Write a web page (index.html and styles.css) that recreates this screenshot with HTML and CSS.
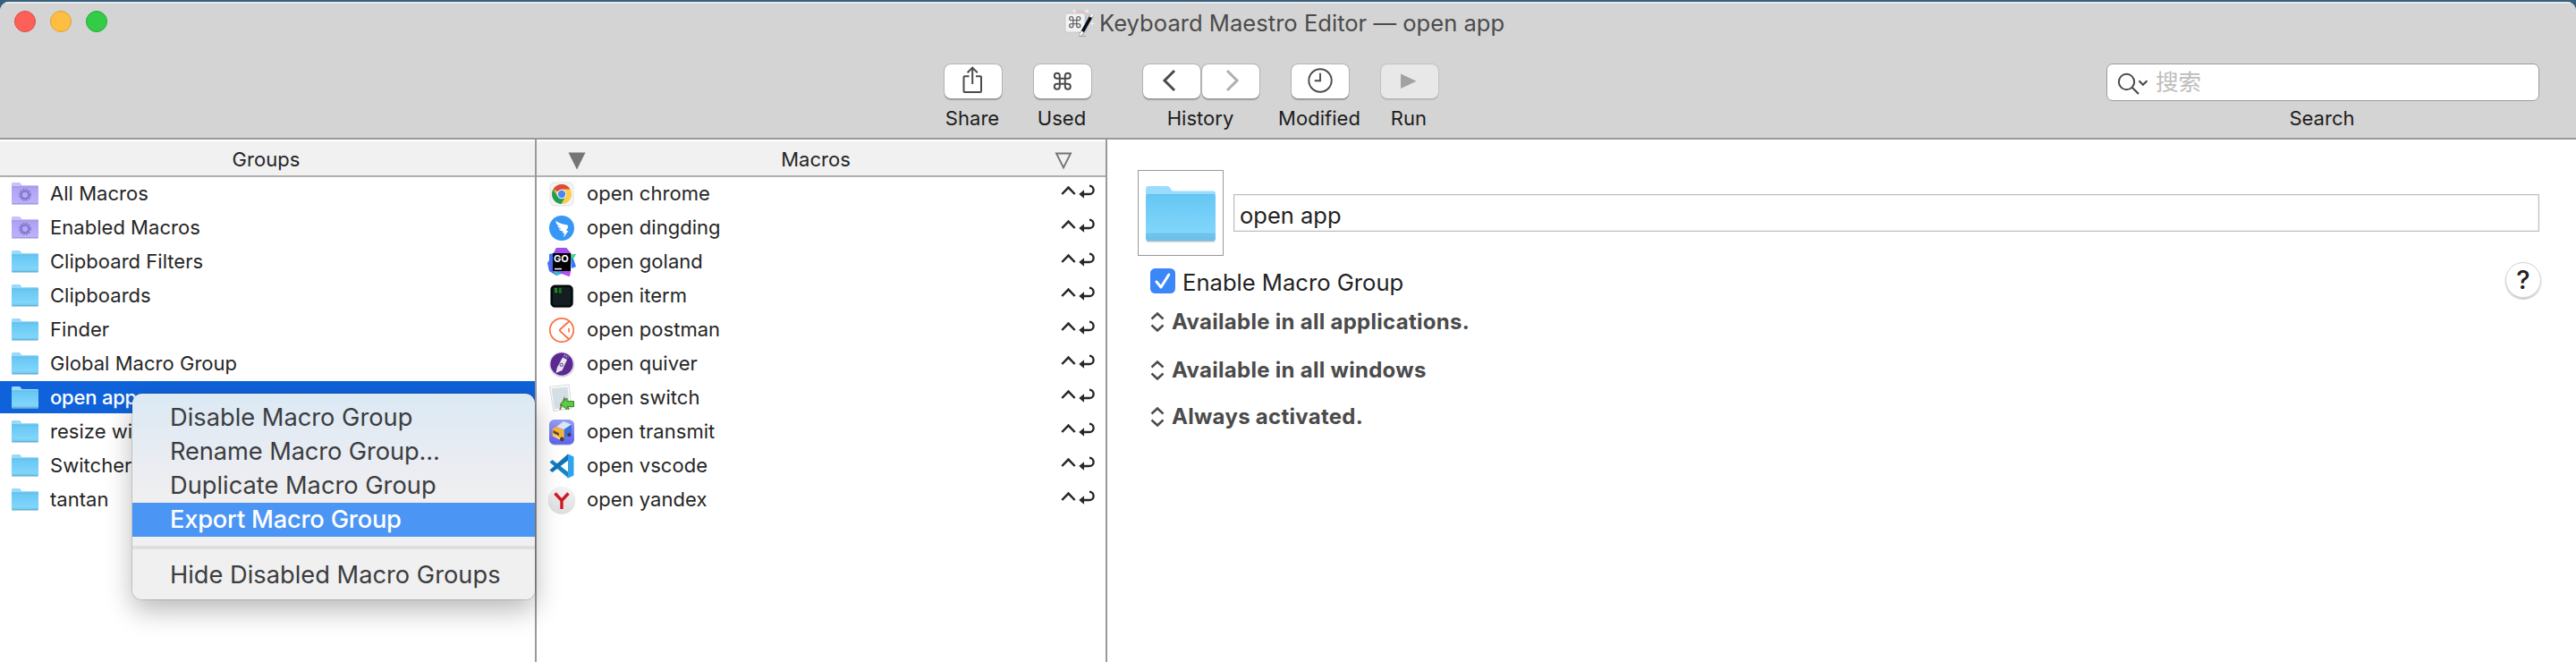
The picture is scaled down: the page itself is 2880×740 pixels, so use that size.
FILE: index.html
```html
<!DOCTYPE html>
<html lang="en">
<head>
<meta charset="utf-8">
<title>Keyboard Maestro Editor — open app</title>
<link rel="stylesheet" href="styles.css">
</head>
<body>
<svg class="defs" width="0" height="0">
  <defs>
    <linearGradient id="gBlue" x1="0" y1="0" x2="0" y2="1"><stop offset="0" stop-color="#66c7f3"/><stop offset=".8" stop-color="#80d5fb"/><stop offset="1" stop-color="#71c3ea"/></linearGradient>
    <linearGradient id="gPurple" x1="0" y1="0" x2="0" y2="1"><stop offset="0" stop-color="#aea2f2"/><stop offset="1" stop-color="#bcb3fb"/></linearGradient>
    <linearGradient id="gGoland" x1="0" y1="0" x2="1" y2="1"><stop offset="0" stop-color="#1f8cf5"/><stop offset=".5" stop-color="#5a5df5"/><stop offset="1" stop-color="#c44bf0"/></linearGradient>
    <linearGradient id="gTransmit" x1="0" y1="0" x2="0" y2="1"><stop offset="0" stop-color="#9a9bf4"/><stop offset="1" stop-color="#5a63ee"/></linearGradient>
    <linearGradient id="gYandex" x1="0" y1="0" x2="0" y2="1"><stop offset="0" stop-color="#f4f4f4"/><stop offset="1" stop-color="#dedede"/></linearGradient>
    <symbol id="folder" viewBox="0 0 30 25">
      <path d="M0 24.6h30v.8H0z" fill="#c9ccd0"/>
      <path d="M0 1.2Q0 0 1.2 0H8.300q1 0 1.600.7L11.500 3H28.800Q30 3 30 4.200V8H0z" fill="#97dafb"/>
      <path d="M0 5H30V23Q30 24.200 28.800 24.200H1.200Q0 24.200 0 23z" fill="url(#gBlue)"/>
      <path d="M0 4.800H30" stroke="#5bb2dd" stroke-width=".8"/><path d="M.5 23.800H29.500" stroke="#58a9cf" stroke-width=".9"/>
    </symbol>
    <symbol id="smart" viewBox="0 0 30 25">
      <path d="M0 24.6h30v.8H0z" fill="#c9c8d0"/>
      <path d="M0 1.200Q0 0 1.200 0H8.300q1 0 1.600.7L11.500 3H28.800Q30 3 30 4.200V8H0z" fill="#c9c1fb"/>
      <path d="M0 5H30V23Q30 24.200 28.800 24.200H1.200Q0 24.200 0 23z" fill="url(#gPurple)"/>
      <path d="M0 4.800H30M.5 23.800H29.500" stroke="#9286d8" stroke-width=".8"/>
      <circle cx="15" cy="13.800" r="6.300" fill="none" stroke="#8478cf" stroke-width="1.600" stroke-dasharray="1.900 1.400"/>
      <circle cx="15" cy="13.800" r="4.300" fill="none" stroke="#8478cf" stroke-width="2.400"/>
    </symbol>
    <symbol id="keys" viewBox="0 0 39 16">
      <path d="M1.300 11L8.500 3.600l7.200 7.400" fill="none" stroke="#262626" stroke-width="2.500"/>
      <path d="M25 11.300h7a4.600 4.600 0 0 0 0-9.200" fill="none" stroke="#262626" stroke-width="2.400" transform="translate(0 -.3)"/>
      <path d="M20.300 11L26 6.200v9.600z" fill="#262626"/>
    </symbol>
    <symbol id="updown" viewBox="0 0 16 24"><path d="M1.500 8.500L8 2.500l6.500 6M1.500 15.500l6.500 6 6.500-6" fill="none" stroke="#4b4b4b" stroke-width="2.400"/></symbol>
  </defs>
</svg>

<div class="window">
  <header class="top">
    <div class="titlebar">
      <div class="lights"><i class="light red"></i><i class="light amber"></i><i class="light green"></i></div>
      <div class="title">
        <svg width="34" height="34" viewBox="0 0 34 34">
          <path d="M5 12a13 12 0 0 1 24 4" fill="none" stroke="#d9c3cb" stroke-width="3"/>
          <path d="M8 13a10 9 0 0 1 19 4" fill="none" stroke="#d9d7b9" stroke-width="2.500"/>
          <path d="M10 13a8 7 0 0 1 15 4v8q-2 5-9 6" fill="none" stroke="#b9c4e2" stroke-width="3"/>
          <rect x="1" y="8" width="22" height="21" rx="2.500" fill="#f3f3f5" stroke="#c2c2c6" stroke-width=".8"/>
          <g transform="translate(3.700 10.300) scale(.67)"><path d="M18 3a3 3 0 0 0-3 3v12a3 3 0 1 0 3-3H6a3 3 0 1 0 3 3V6a3 3 0 1 0-3 3h12a3 3 0 1 0 0-6z" transform="translate(0 -1)" fill="none" stroke="#66666b" stroke-width="2"/></g>
          <path d="M18.500 31.500L31 9.500" stroke="#0c0c10" stroke-width="3.600"/>
          <path d="M29.400 12.300L31.200 9M18.200 32l2.200-3.800" stroke="#f2f2f2" stroke-width="3.400"/>
          <path d="M11 3v5M8.500 5.500h5M25 3v5M22.500 5.500h5M31 17v5M28.500 19.500h5" stroke="#f1f1f1"/>
          <path d="M16 33.500h8" stroke="#a5a5a9"/>
        </svg>
        <span>Keyboard Maestro Editor — open app</span>
      </div>
    </div>
    <div class="toolbar">
      <div class="tool share">
        <div class="btn"><svg width="64" height="38" viewBox="0 0 64 38"><path d="M27.500 13.300H22.500Q21.500 13.300 21.500 14.300V30Q21.500 31 22.500 31H40Q41 31 41 30V14.300Q41 13.300 40 13.300H35M31.200 22V4M25.600 9.200L31.200 3.600L36.800 9.200" fill="none" stroke="#4b4b4b" stroke-width="2"/></svg></div>
        <span class="label">Share</span>
      </div>
      <div class="tool used">
        <div class="btn"><svg width="64" height="38" viewBox="0 0 64 38"><path transform="translate(19.800 6.800)" d="M18 3a3 3 0 0 0-3 3v12a3 3 0 1 0 3-3H6a3 3 0 1 0 3 3V6a3 3 0 1 0-3 3h12a3 3 0 1 0 0-6z" fill="none" stroke="#4b4b4b" stroke-width="2"/></svg></div>
        <span class="label">Used</span>
      </div>
      <div class="tool history">
        <div class="pair">
          <div class="btn"><svg width="64" height="38" viewBox="0 0 64 38"><path d="M35 7L24 18L35 29" fill="none" stroke="#4b4b4b" stroke-width="3"/></svg></div>
          <div class="btn"><svg width="64" height="38" viewBox="0 0 64 38"><path d="M28 7L39 18L28 29" fill="none" stroke="#b0b0b0" stroke-width="3"/></svg></div>
        </div>
        <span class="label">History</span>
      </div>
      <div class="tool modified">
        <div class="btn"><svg width="64" height="38" viewBox="0 0 64 38"><circle cx="32" cy="18" r="12.700" fill="none" stroke="#4b4b4b" stroke-width="1.900"/><path d="M32 9.700v8.600h-6.300" fill="none" stroke="#4b4b4b" stroke-width="1.900"/></svg></div>
        <span class="label">Modified</span>
      </div>
      <div class="tool run">
        <div class="btn off"><svg width="64" height="38" viewBox="0 0 64 38"><path d="M22 10.500L39.500 18.700L22 27z" fill="#a2a2a2"/></svg></div>
        <span class="label">Run</span>
      </div>
      <div class="tool search">
        <div class="field">
          <svg width="50" height="40" viewBox="0 0 50 40"><circle cx="21.500" cy="19.500" r="8.700" fill="none" stroke="#4b4b4b" stroke-width="2"/><path d="M27.700 25.700L35 33M35.500 18.300l4.400 4.400 4.600-4.400" fill="none" stroke="#4b4b4b" stroke-width="2.200"/></svg>
          <span class="ph">搜索</span>
        </div>
        <span class="label">Search</span>
      </div>
    </div>
  </header>

  <main class="panes">
    <section class="pane groups">
      <div class="head"><span>Groups</span></div>
      <ul class="list">
        <li><svg class="fold"><use href="#smart"/></svg>All Macros</li>
        <li><svg class="fold"><use href="#smart"/></svg>Enabled Macros</li>
        <li><svg class="fold"><use href="#folder"/></svg>Clipboard Filters</li>
        <li><svg class="fold"><use href="#folder"/></svg>Clipboards</li>
        <li><svg class="fold"><use href="#folder"/></svg>Finder</li>
        <li><svg class="fold"><use href="#folder"/></svg>Global Macro Group</li>
        <li class="sel"><svg class="fold"><use href="#folder"/></svg>open app</li>
        <li><svg class="fold"><use href="#folder"/></svg>resize wi</li>
        <li><svg class="fold"><use href="#folder"/></svg>Switcher</li>
        <li><svg class="fold"><use href="#folder"/></svg>tantan</li>
      </ul>
      <div class="menu">
        <div class="item">Disable Macro Group</div>
        <div class="item rename">Rename Macro Group...</div>
        <div class="item">Duplicate Macro Group</div>
        <div class="item on">Export Macro Group</div>
        <div class="sep"></div>
        <div class="item">Hide Disabled Macro Groups</div>
      </div>
    </section>

    <section class="pane macros">
      <div class="head">
        <svg class="tri" width="20" height="20" viewBox="0 0 20 20"><path d="M.5.5h19L10 19.500z" fill="#757575"/></svg>
        <span>Macros</span>
        <svg class="tri" width="20" height="20" viewBox="0 0 20 20"><path d="M2 1.500h16L10 17.500z" fill="none" stroke="#757575" stroke-width="1.900"/></svg>
      </div>
      <ul class="list">
        <li><svg class="app" viewBox="0 0 32 32"><rect x="3" y="3" width="26" height="26" rx="5" fill="#f4f4f4" stroke="#e2e2e2"/><circle cx="16" cy="16" r="11" fill="#fccd48"/><path d="M6.500 10.500A11 11 0 0 1 25.500 10.500H16L11.200 13z" fill="#dc4b3e"/><path d="M6.500 10.500A11 11 0 0 0 15.500 27L20 19 11.500 18.500z" fill="#1f9d5b"/><circle cx="16" cy="16" r="5.200" fill="#f4f4f4"/><circle cx="16" cy="16" r="4.200" fill="#4b87f0"/></svg>open chrome<svg class="keys"><use href="#keys"/></svg></li>
        <li><svg class="app" viewBox="0 0 32 32"><circle cx="16" cy="16" r="14" fill="#3797f7"/><path d="M9.500 7.500q2 3 12.500 5 1.800 1 .8 3L21 19h2.500l-5.500 7.500 1-5h-2.200l.7-2q-3.500 0-5-3 2 1 3.500.500-4-1-4.800-4 2 1.200 3 1.200Q9 12 9.500 7.500z" fill="#fff"/></svg>open dingding<svg class="keys"><use href="#keys"/></svg></li>
        <li><svg class="app" viewBox="0 0 32 32"><path d="M10 0h11l6 7-1 19-2 6-8-3-6 2-8-5L0 17l2-3V7l5-1z" fill="url(#gGoland)"/><path d="M10 0h11l5 6H7z" fill="#a44df0"/><path d="M26 8l6-1-3 5 3 9-5 2z" fill="#2f7df6"/><path d="M26 8l6-1-4 6z" fill="#3fe070"/><path d="M6 26l10 2-6 3z" fill="#28c7c0"/><path d="M18 26h8l-1 6-7-3z" fill="#b350f2"/><rect x="6" y="6" width="20" height="20" fill="#000"/><text x="7" y="15.800" class="go">GO</text><path d="M8 23.600h8" stroke="#fff" stroke-width="1.500"/></svg>open goland<svg class="keys"><use href="#keys"/></svg></li>
        <li><svg class="app" viewBox="0 0 32 32"><rect x="4.600" y="4.600" width="23" height="23" rx="4" fill="#141d21" stroke="#010405" stroke-width="2.400"/><rect x="3.400" y="3.400" width="25.400" height="25.400" rx="5" fill="none" stroke="#8b989a" stroke-width=".5"/><text x="7.500" y="12.300" class="term">$</text><path d="M13 6.700h2.600v6H13z" fill="#157a1b"/></svg>open iterm<svg class="keys"><use href="#keys"/></svg></li>
        <li><svg class="app" viewBox="0 0 32 32"><circle cx="16" cy="16" r="13.200" fill="none" stroke="#fb6f40" stroke-width="1.700"/><path d="M24 6.500L14.500 15q-1.200 1.200 0 2.400L24.500 26.500" fill="none" stroke="#fb6f40" stroke-width="1.900"/><path d="M23.500 14q1.600 2 .2 4.500" fill="none" stroke="#fb6f40" stroke-width="1.500"/></svg>open postman<svg class="keys"><use href="#keys"/></svg></li>
        <li><svg class="app" viewBox="0 0 32 32"><circle cx="16.300" cy="16.700" r="14" fill="#c4c2c8"/><circle cx="16" cy="16" r="13.300" fill="#5a2a92" stroke="#ece9f0" stroke-width="1.300"/><path d="M17 8.500l5 2.500-5.500 12L9.500 26l1.300-6z" fill="#e9e6ee"/><circle cx="15.700" cy="16.800" r="1.700" fill="none" stroke="#5a2a92"/><path d="M18.500 6l5 2.400" stroke="#a28bc4" stroke-width="3" stroke-dasharray="1.500 1"/></svg>open quiver<svg class="keys"><use href="#keys"/></svg></li>
        <li><svg class="app" viewBox="0 0 32 32"><path d="M2.500 3.500L24 1l3 26.500L7 30.500z" fill="#fff" stroke="#c9cbcc" stroke-width=".8"/><path d="M4.500 5.300L22.500 3.200l2.500 23L8 28.500z" fill="#d3dfe4"/><path d="M14 29l5-13 5 13M14 24h10" stroke="#8a6a3c" stroke-width="1.500" fill="none"/><path d="M14.500 22.500l7.500-6.500v3.600h7.500v6H22V29z" fill="#5ecb47" stroke="#2b8424"/></svg>open switch<svg class="keys"><use href="#keys"/></svg></li>
        <li><svg class="app" viewBox="0 0 32 32"><rect x="2" y="2.500" width="28" height="28" rx="6" fill="#9a9bb8"/><rect x="2" y="2" width="28" height="27.500" rx="6" fill="url(#gTransmit)"/><path d="M10 10l8-6 9 3.500-8 6z" fill="#d6e6f4"/><path d="M18.500 13L27 7.500v9L18.500 23z" fill="#3b6ede"/><path d="M5.500 12.500l4.500-2.700 8.800 4.200v9l-3.800 2-9.500-5z" fill="#f6b13c"/><path d="M6.500 14l6.500 3.300v2.700L6.500 16.800z" fill="#53423a"/><circle cx="16.300" cy="24" r="2.400" fill="#4a413d"/><circle cx="24.500" cy="19" r="2.200" fill="#383c56"/><path d="M6.500 19.500l7.500 4" stroke="#fbe2a0" stroke-width="1.500"/></svg>open transmit<svg class="keys"><use href="#keys"/></svg></li>
        <li><svg class="app" viewBox="0 0 32 32"><path d="M2.500 11.800L5.500 9 23 22.500V29z" fill="#1583c8"/><path d="M2.500 20.500L5.500 23 23 9.800V2.500z" fill="#1173b3"/><path d="M22 2l7.500 3.500v21L22 30q1-.6 1-2V4q0-1.400-1-2z" fill="#2fa4ec"/></svg>open vscode<svg class="keys"><use href="#keys"/></svg></li>
        <li><svg class="app" viewBox="0 0 32 32"><circle cx="16" cy="16.500" r="15.200" fill="#d8d8d8"/><circle cx="16" cy="16" r="15" fill="url(#gYandex)"/><path d="M8.500 8.500L16 16.500 23.500 8.500M16 16V26" fill="none" stroke="#d21a22" stroke-width="3.400"/></svg>open yandex<svg class="keys"><use href="#keys"/></svg></li>
      </ul>
    </section>

    <section class="detail">
      <div class="namerow">
        <div class="well"><svg width="78" height="64" viewBox="0 0 78 64">
          <path d="M1 62h76" stroke="#c5c8ca" stroke-width="1.500"/>
          <path d="M0 3Q0 0 3 0H23.500q2 0 3.200 1.600L28.800 4.400Q29.600 5.600 31 5.600H75Q78 5.600 78 8.600V20H0z" fill="#99dcfe"/>
          <path d="M0 12Q0 9.500 2.500 9.500H75.500Q78 9.500 78 12V59Q78 61.300 75.700 61.300H2.300Q0 61.300 0 59z" fill="url(#gBlue)"/>
          <path d="M1 9.500H77" stroke="#62bfe9"/>
          <path d="M0 53.500H78M0 55.800H78M0 58H78M.7 60.500H77.300" stroke="#62b3da" stroke-width=".9"/>
        </svg></div>
        <div class="name">open app</div>
      </div>
      <div class="enable">
        <svg width="28" height="28" viewBox="0 0 28 28"><rect width="28" height="28" rx="5.500" fill="#3b87f8"/><path d="M7 15l5 6L20.800 7" fill="none" stroke="#fff" stroke-width="3" stroke-linecap="round" stroke-linejoin="round"/></svg>
        <span>Enable Macro Group</span>
        <div class="help">?</div>
      </div>
      <div class="opt one"><svg width="16" height="24"><use href="#updown"/></svg><span>Available in all applications.</span></div>
      <div class="opt two"><svg width="16" height="24"><use href="#updown"/></svg><span>Available in all windows</span></div>
      <div class="opt three"><svg width="16" height="24"><use href="#updown"/></svg><span>Always activated.</span></div>
    </section>
  </main>
</div>
</body>
</html>
```

FILE: styles.css
```css
* { box-sizing: border-box; }
html, body { margin: 0; }
body {
  width: 2880px; height: 740px; overflow: hidden;
  background: #35607f;
  font-family: Inter, "Noto Sans CJK SC", sans-serif;
  font-size: 22px; letter-spacing: .03px; color: #262626;
}
.defs { position: absolute; }
svg { display: block; flex: none; }

.window {
  margin-top: 2px; height: 738px; overflow: hidden;
  display: flex; flex-direction: column;
  background: #fff; border-radius: 10px 10px 0 0;
}
.top {
  height: 154px; flex: none;
  background: #d4d4d4;
  border-top: 2px solid #e9e9e9; border-bottom: 2px solid #999;
}
.titlebar { height: 44px; display: grid; grid-template-columns: 1190px auto 1fr; }
.lights { display: flex; gap: 16px; padding: 8px 0 0 16px; }
.light { width: 24px; height: 24px; border-radius: 50%; border: 1px solid; }
.red { background: #fd6059; border-color: #e24a44; }
.amber { background: #febe41; border-color: #e1a02e; }
.green { background: #33cb48; border-color: #24ad37; }
.title { display: flex; gap: 5px; padding-top: 3px; font-size: 25.6px; letter-spacing: 0; color: #4b4b4b; }
.title span { line-height: 37px; }

.toolbar { display: flex; align-items: flex-start; padding: 24px 41px 0 1056px; }
.tool { display: flex; flex-direction: column; align-items: center; width: 64px; }
.btn {
  width: 64px; height: 38px; flex: none;
  background: #fff; border-radius: 7px;
  box-shadow: 0 0 0 1px rgba(0,0,0,.14), 0 1.5px 1px rgba(0,0,0,.22);
}
.off { background: #e8e8e8; box-shadow: 0 0 0 1px rgba(0,0,0,.08), 0 1.5px 1px rgba(0,0,0,.1); }
.pair { display: flex; gap: 2px; }
.label { line-height: 30px; margin-top: 7px; padding-right: 2px; color: #1d1d1d; white-space: nowrap; }
.used { margin-left: 36px; }
.history { margin-left: 58px; width: 130px; }
.modified { margin-left: 36px; }
.run { margin-left: 36px; }
.search { margin-left: auto; width: 484px; }
.field {
  width: 484px; height: 42px; margin: -1px 0 -3px;
  display: flex; align-items: center;
  background: #fff; border: 1px solid #9b9b9b; border-radius: 7px;
}
.ph { padding-left: 4px; font-size: 25.5px; line-height: 40px; letter-spacing: 0; color: #bdbdbd; }

.panes { flex: 1; display: flex; }
.pane { position: relative; border-right: 2px solid #999; }
.groups { width: 600px; z-index: 1; }
.macros { width: 638px; }
.head {
  height: 42px; display: flex; justify-content: center;
  background: #f1f1f1;
  border-top: 2px solid #fff; border-bottom: 2px solid #b0b0b0;
  line-height: 41px;
}
.groups .head { padding-right: 3px; }
.macros .head { justify-content: space-between; padding: 0 37px 0 35px; }
.macros .head span { padding-right: 10px; }
.tri { margin-top: 12px; }
.list { list-style: none; margin: 0; padding: 0; }
.list li { height: 38px; padding-bottom: 1px; display: flex; align-items: center; line-height: 37px; }
.groups li { padding-left: 13px; }
.fold { width: 30px; height: 25px; margin-right: 13px; }
.sel { color: #fff; font-weight: 500; background: linear-gradient(#0f62da, #0f62da) 0 0 / 100% 36px no-repeat; letter-spacing: -.2px; }
.macros li { padding-left: 12px; padding-right: 10px; }
.app { width: 32px; height: 32px; margin-right: 12px; }
.keys { width: 39px; height: 16px; margin: -6px 1px 0 auto; }
.go { font: bold 11px Inter, sans-serif; fill: #fff; letter-spacing: 0; }
.term { font: bold 7px "Liberation Mono", monospace; fill: #20b526; }

.menu {
  position: absolute; left: 148px; top: 284px;
  width: 450px; height: 230px; padding-top: 8px;
  border-radius: 11px;
  background: linear-gradient(#dbe9f4, #ecedf2 38%, #f0f0f0 55%);
  box-shadow: 0 0 0 1px rgba(0,0,0,.13), 0 12px 30px rgba(0,0,0,.28);
  font-size: 27.25px; letter-spacing: 0; color: #3b3d40;
}
.item { height: 38px; padding-left: 42px; line-height: 38px; }
.rename { letter-spacing: -.1px; }
.on { background: #4b95f5; color: #fff; font-weight: 500; letter-spacing: -.2px; }
.sep { height: 4px; margin: 10px 0; background: #dfdfdf; }

.detail { flex: 1; padding: 34px 41px 0 34px; }
.namerow { display: flex; align-items: center; gap: 11px; }
.well { width: 96px; height: 96px; padding: 17px 0 0 8px; border: 1px solid #999; }
.name {
  flex: 1; height: 42px; padding-left: 6px;
  border: 1px solid #bdbdbd; box-shadow: inset 0 0 0 1px #f0f0f0;
  font-size: 25.5px; line-height: 45px; letter-spacing: 0; color: #222;
}
.enable { height: 40px; margin-top: 7px; display: flex; padding-left: 14px; font-size: 25.6px; letter-spacing: 0; color: #222; }
.enable svg { margin-top: 7px; }
.enable span { padding-left: 8px; line-height: 45px; }
.help {
  width: 40px; height: 40px; margin: 0 -2px 0 auto;
  border: 1px solid #d2d2d2; border-radius: 50%;
  box-shadow: 0 1.5px 1.5px rgba(0,0,0,.25);
  text-align: center; font-size: 29px; font-weight: 500; line-height: 38px;
}
.opt {
  height: 30px; display: flex; align-items: center; gap: 8px; padding-left: 14px;
  font-size: 24px; font-weight: 700; line-height: 30px; letter-spacing: .28px; color: #4b4b4b;
}
.one { margin-top: 12px; }
.two { margin-top: 24px; }
.three { margin-top: 22px; }
```
